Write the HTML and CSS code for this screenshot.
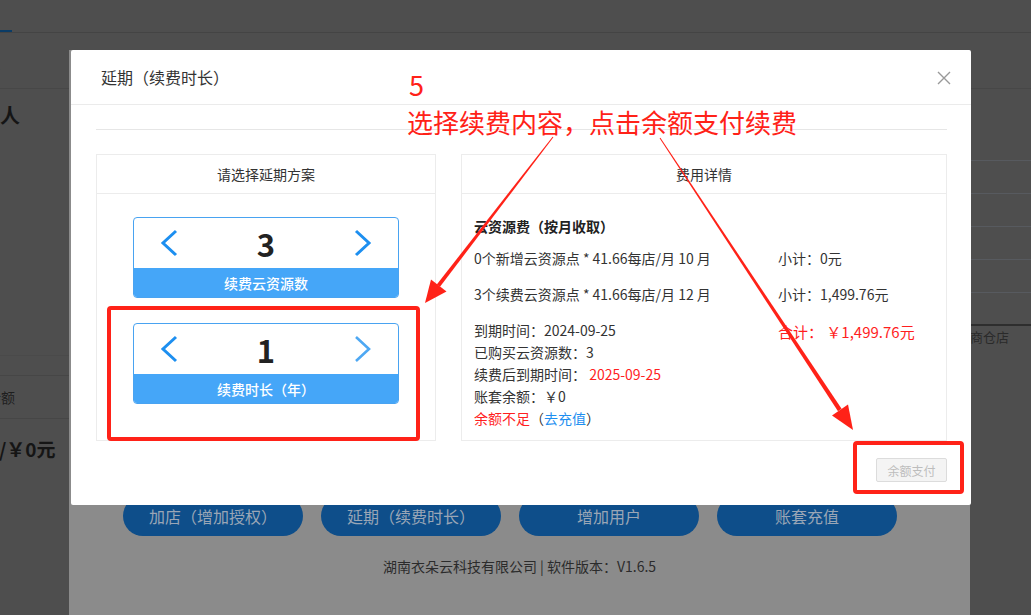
FILE: index.html
```html
<!DOCTYPE html>
<html lang="zh">
<head>
<meta charset="utf-8">
<title>延期（续费时长）</title>
<link rel="stylesheet" href="styles.css">
</head>
<body>
<div class="page">
  <div class="bg-top"><span class="bg-tab"></span></div>
  <div class="bg-sub"><span class="bg-dash">-</span></div>
  <div class="bg-main">
    <div class="bg-left">
      <div class="bg-person">负责人</div>
      <div class="bg-gap"></div>
      <div class="bg-line bg-line-a"></div>
      <div class="bg-line bg-line-b"></div>
      <div class="bg-label">余额</div>
      <div class="bg-line"></div>
      <div class="bg-money">/￥0元</div>
    </div>
    <div class="bg-right">
      <div class="bg-rows">
        <div class="bg-row"></div>
        <div class="bg-row"></div>
        <div class="bg-row"></div>
        <div class="bg-row"></div>
        <div class="bg-row"></div>
      </div>
      <div class="bg-store">供商仓店</div>
    </div>
  </div>
</div>

<div class="layer">
  <div class="layer-actions">
    <span class="pill">加店（增加授权）</span>
    <span class="pill">延期（续费时长）</span>
    <span class="pill">增加用户</span>
    <span class="pill">账套充值</span>
  </div>
  <div class="layer-foot">湖南衣朵云科技有限公司 | 软件版本：V1.6.5</div>
</div>

<div class="modal">
  <div class="modal-head">
    <span class="modal-title">延期（续费时长）</span>
    <svg class="close" width="14" height="14" viewBox="0 0 14 14"><path d="M1 1 L13 13 M13 1 L1 13" stroke="#999" stroke-width="1.4" fill="none"/></svg>
  </div>
  <div class="modal-body">
    <div class="divider"></div>
    <div class="panels">
      <div class="panel panel-left">
        <div class="panel-head">请选择延期方案</div>
        <div class="steppers">
          <div class="stepper">
            <div class="stepper-main">
              <svg class="chev" width="20" height="28" viewBox="0 0 20 28"><path d="M17 2 L4 14 L17 26" stroke="#1d8ff0" stroke-width="3" fill="none"/></svg>
              <span class="num">3</span>
              <svg class="chev" width="20" height="28" viewBox="0 0 20 28"><path d="M3 2 L16 14 L3 26" stroke="#1d8ff0" stroke-width="3" fill="none"/></svg>
            </div>
            <div class="stepper-bar">续费云资源数</div>
          </div>
          <div class="stepper">
            <div class="stepper-main">
              <svg class="chev" width="20" height="28" viewBox="0 0 20 28"><path d="M17 2 L4 14 L17 26" stroke="#1d8ff0" stroke-width="3" fill="none"/></svg>
              <span class="num">1</span>
              <svg class="chev" width="20" height="28" viewBox="0 0 20 28"><path d="M3 2 L16 14 L3 26" stroke="#4ea8f3" stroke-width="2.6" fill="none"/></svg>
            </div>
            <div class="stepper-bar">续费时长（年）</div>
          </div>
        </div>
      </div>
      <div class="panel panel-right">
        <div class="panel-head">费用详情</div>
        <div class="fee">
          <div class="fee-title">云资源费（按月收取）</div>
          <div class="fee-row"><span>0个新增云资源点 * 41.66每店/月 10 月</span><span>小计：0元</span></div>
          <div class="fee-row"><span>3个续费云资源点 * 41.66每店/月 12 月</span><span>小计：1,499.76元</span></div>
          <div class="fee-sum">
            <div class="fee-lines">
              <div>到期时间：2024-09-25</div>
              <div>已购买云资源数：3</div>
              <div>续费后到期时间： <span class="red">2025-09-25</span></div>
              <div>账套余额：￥0</div>
              <div><span class="red">余额不足</span>（<span class="blue">去充值</span>）</div>
            </div>
            <div class="total">合计： ￥1,499.76元</div>
          </div>
        </div>
      </div>
    </div>
    <div class="modal-foot">
      <span class="pay-btn">余额支付</span>
    </div>
  </div>
</div>

<div class="anno-step">5</div>
<div class="anno-text">选择续费内容，点击余额支付续费</div>
<div class="anno-box anno-box-1"></div>
<div class="anno-box anno-box-2"></div>
<svg class="anno-arrows" width="1031" height="615" viewBox="0 0 1031 615">
  <polygon fill="#ff2218" points="553.4,137.3 552.6,136.7 436.8,284.4 440.0,286.8"/>
  <polygon fill="#ff2218" points="425,303 446.5,291.5 431,279.5"/>
  <polygon fill="#ff2218" points="660.4,137.7 659.6,138.3 838.0,411.2 841.6,408.8"/>
  <polygon fill="#ff2218" points="853,430 848,404.5 832,415.5"/>
</svg>
</body>
</html>
```

FILE: styles.css
```css
* { box-sizing: border-box; }
html, body { margin: 0; padding: 0; }
body {
  width: 1031px;
  height: 615px;
  overflow: hidden;
  position: relative;
  background: #4e4e4e;
  font-family: "Noto Sans CJK SC", "Noto Sans", sans-serif;
  color: #333;
}

/* dimmed background page */
.page { width: 1031px; height: 615px; }
.bg-top {
  height: 33px;
  border-bottom: 1px solid #444;
  position: relative;
}
.bg-tab {
  position: absolute;
  left: 0;
  bottom: 0;
  width: 12px;
  height: 2px;
  background: #0b3c66;
}
.bg-sub {
  height: 56px;
  border-bottom: 1px solid #474747;
  font-size: 12px;
  color: #222;
  line-height: 70px;
}
.bg-dash { margin-left: -4px; }
.bg-main { display: flex; justify-content: space-between; }
.bg-left { width: 69px; overflow: hidden; }
.bg-person {
  margin-top: 14px;
  margin-left: -40px;
  font-size: 20px;
  font-weight: bold;
  color: #151515;
  line-height: 24px;
  white-space: nowrap;
}
.bg-gap { height: 228px; }
.bg-line { height: 1px; background: #464646; }
.bg-line-a { background: #4a4a4a; }
.bg-line-b { margin-top: 19px; }
.bg-label {
  height: 42px;
  line-height: 42px;
  font-size: 14px;
  color: #1e1e1e;
  margin-left: -13px;
  white-space: nowrap;
}
.bg-money {
  margin-top: 18px;
  margin-left: -1px;
  font-size: 19px;
  font-weight: bold;
  color: #151515;
  white-space: nowrap;
  line-height: 24px;
}
.bg-right { width: 61px; overflow: hidden; padding-top: 71px; }
.bg-row { height: 33px; border-top: 1px solid #575a5f; }
.bg-rows { border-bottom: 2px solid #2e2e2e; height: 166px; }
.bg-store {
  margin-left: -13px;
  font-size: 13px;
  color: #2a2a2a;
  line-height: 22px;
  white-space: nowrap;
}

/* lighter layer behind modal */
.layer {
  position: absolute;
  left: 69px;
  top: 50px;
  width: 901px;
  height: 565px;
  background: #8b8b8b;
  display: flex;
  flex-direction: column;
  padding-top: 446px;
}
.layer-actions {
  display: flex;
  gap: 18px;
  padding-left: 54px;
}
.pill {
  width: 180px;
  height: 40px;
  border-radius: 20px;
  background: #0e4e8a;
  color: #9aa6b6;
  font-size: 16px;
  display: flex;
  align-items: center;
  justify-content: center;
}
.layer-foot {
  margin-top: 20px;
  text-align: center;
  font-size: 14px;
  color: #2b2b2b;
  line-height: 20px;
}

/* modal */
.modal {
  position: absolute;
  left: 71px;
  top: 50px;
  width: 900px;
  height: 455px;
  background: #fff;
  border-radius: 2px;
}
.modal-head {
  height: 55px;
  border-bottom: 1px solid #ebebeb;
  display: flex;
  align-items: center;
  justify-content: space-between;
  padding: 0 20px 0 30px;
}
.modal-title { font-size: 16px; color: #333; }
.close { display: block; margin-top: 2px; }
.modal-body { padding: 0 24px 0 25px; }
.divider { margin-top: 24px; height: 1px; background: #e6e6e6; }
.panels { display: flex; gap: 25px; margin-top: 24px; height: 287px; }
.panel { border: 1px solid #ececec; }
.panel-left { width: 340px; }
.panel-right { flex: 1; }
.panel-head {
  height: 39px;
  border-bottom: 1px solid #ececec;
  display: flex;
  align-items: center;
  justify-content: center;
  font-size: 14px;
  color: #333;
}

.steppers {
  display: flex;
  flex-direction: column;
  align-items: center;
  gap: 25px;
  padding-top: 23px;
}
.stepper {
  width: 266px;
  height: 81px;
  border: 1px solid #49a3f1;
  border-radius: 4px;
  overflow: hidden;
  display: flex;
  flex-direction: column;
}
.stepper-main {
  height: 50px;
  display: flex;
  align-items: center;
  justify-content: space-between;
  padding: 0 25px 0 25px;
}
.chev { display: block; }
.num {
  font-size: 31px;
  font-weight: bold;
  color: #222;
  line-height: 1;
}
.stepper-bar {
  flex: 1;
  background: #45a6f8;
  color: #fff;
  font-size: 14px;
  font-weight: 500;
  display: flex;
  align-items: center;
  justify-content: center;
}

.fee { padding: 22px 12px 0 12px; font-size: 14px; color: #333; }
.fee-title { font-size: 14px; font-weight: bold; line-height: 20px; color: #222; }
.fee-row {
  display: grid;
  grid-template-columns: 304px 1fr;
  height: 36px;
  align-items: center;
}
.fee-title + .fee-row { margin-top: 4px; }
.fee-sum {
  display: grid;
  grid-template-columns: 304px 1fr;
  margin-top: 7px;
}
.fee-lines div { line-height: 22px; }
.total { color: #ff1f1f; font-size: 15px; line-height: 26px; }
.red { color: #ff1f1f; }
.blue { color: #1e8ff0; }

.modal-foot { display: flex; justify-content: flex-end; margin-top: 17px; }
.pay-btn {
  width: 71px;
  height: 24px;
  border: 1px solid #dcdcdc;
  background: #f4f4f4;
  color: #bdbdbd;
  font-size: 12px;
  border-radius: 2px;
  display: flex;
  align-items: center;
  justify-content: center;
}

/* annotations */
.anno-step {
  position: absolute;
  left: 409px;
  top: 68px;
  font-size: 27px;
  line-height: 34px;
  color: #ff2218;
}
.anno-text {
  position: absolute;
  left: 407px;
  top: 104px;
  font-size: 26px;
  line-height: 36px;
  color: #ff2218;
  white-space: nowrap;
}
.anno-box {
  position: absolute;
  border: 4px solid #ff2218;
  border-radius: 4px;
}
.anno-box-1 { left: 107px; top: 306px; width: 313px; height: 135px; }
.anno-box-2 { left: 853px; top: 441px; width: 111px; height: 53px; }
.anno-arrows { position: absolute; left: 0; top: 0; pointer-events: none; }
```
